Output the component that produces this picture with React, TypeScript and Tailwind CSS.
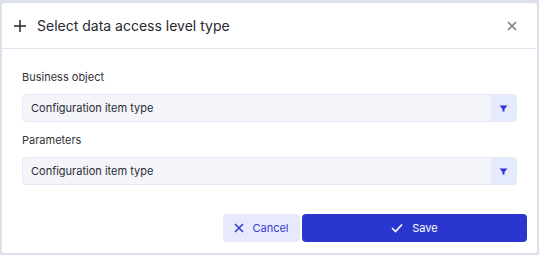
import React from "react";

const font = { fontFamily: "Inter, 'Noto Sans', sans-serif" };

function Select({ value }: { value: string }) {
  return (
    <div className="flex h-[28px] w-full overflow-hidden rounded-[4px] border border-[#e4e8f7] bg-[#f4f5fa]">
      <div className="flex flex-1 items-center pl-[8px] text-[11px] text-[#2b2b33]">{value}</div>
      <div className="flex w-[25px] items-center justify-center bg-[#e6eafd]">
        <svg width="9" height="7" viewBox="0 0 9 7">
          <path d="M0.5 0.5 H8.5 L5.5 4 V6.5 H3.5 V4 Z" fill="#2f33d4" />
        </svg>
      </div>
    </div>
  );
}

export default function App() {
  return (
    <div className="h-[255px] w-[539px] bg-[#dde1ed] pt-[3px] pl-[2px] pr-[2px] pb-[2px]" style={font}>
      <div className="flex h-full w-full flex-col rounded-[3px] bg-white">
        <div className="flex h-[46px] items-center border-b border-[#e2e5ee] pl-[11px] pr-[20px]">
          <svg width="14" height="14" viewBox="0 0 14 14" className="mr-[10px]">
            <path d="M7 1 V13 M1 7 H13" stroke="#2a2a2a" strokeWidth="1.5" />
          </svg>
          <div className="flex-1 text-[14px] text-[#2a2a30]">Select data access level type</div>
          <svg width="10" height="10" viewBox="0 0 10 10">
            <path d="M1 1 L9 9 M9 1 L1 9" stroke="#7b7b80" strokeWidth="1.5" />
          </svg>
        </div>
        <div className="flex flex-col px-[20px] pt-[20px]">
          <div className="mb-[9px] text-[11px] leading-[16px] text-[#333338]">Business object</div>
          <Select value="Configuration item type" />
          <div className="mb-[9px] mt-[10px] text-[11px] leading-[16px] text-[#333338]">Parameters</div>
          <Select value="Configuration item type" />
        </div>
        <div className="mt-[29px] flex justify-end gap-[2px] pr-[10px]">
          <button className="flex h-[28px] w-[77px] items-center justify-center gap-[8px] rounded-[4px] bg-[#e6eafc] text-[11px] text-[#3a3ad0]">
            <svg width="10" height="10" viewBox="0 0 10 10">
              <path d="M1 1 L9 9 M9 1 L1 9" stroke="#3a3ad0" strokeWidth="1.6" />
            </svg>
            Cancel
          </button>
          <button className="flex h-[28px] w-[225px] items-center justify-center gap-[9px] rounded-[4px] bg-[#2b35cf] text-[11px] text-white">
            <svg width="12" height="10" viewBox="0 0 12 10">
              <path d="M1 5 L4.5 8.5 L11 1.5" stroke="white" strokeWidth="1.6" fill="none" />
            </svg>
            Save
          </button>
        </div>
      </div>
    </div>
  );
}
